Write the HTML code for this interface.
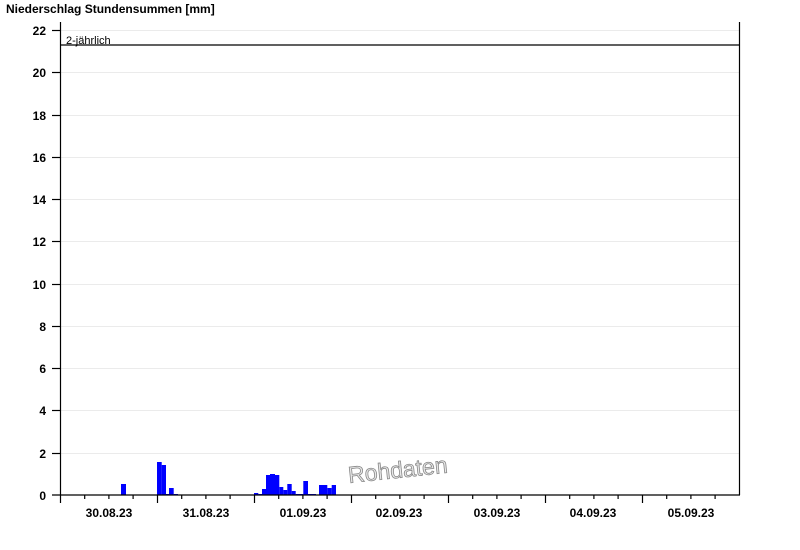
<!DOCTYPE html>
<html><head><meta charset="utf-8"><style>
html,body{margin:0;padding:0;background:#fff;width:800px;height:550px;overflow:hidden}
svg{display:block}
text{font-family:"Liberation Sans",Arial,sans-serif}
</style></head><body>
<svg width="800" height="550" xmlns="http://www.w3.org/2000/svg">
<text x="6" y="13" font-size="12" font-weight="bold" fill="#000">Niederschlag Stundensummen [mm]</text>
<g stroke="#ebebeb" stroke-width="1">
<line x1="61" x2="740" y1="30.5" y2="30.5"/>
<line x1="61" x2="740" y1="72.5" y2="72.5"/>
<line x1="61" x2="740" y1="115.5" y2="115.5"/>
<line x1="61" x2="740" y1="157.5" y2="157.5"/>
<line x1="61" x2="740" y1="199.5" y2="199.5"/>
<line x1="61" x2="740" y1="241.5" y2="241.5"/>
<line x1="61" x2="740" y1="284.5" y2="284.5"/>
<line x1="61" x2="740" y1="326.5" y2="326.5"/>
<line x1="61" x2="740" y1="368.5" y2="368.5"/>
<line x1="61" x2="740" y1="410.5" y2="410.5"/>
<line x1="61" x2="740" y1="453.5" y2="453.5"/>
</g>
<g fill="#0000ff">
<rect x="121" y="484" width="5" height="11"/>
<rect x="157" y="462" width="4.7" height="33"/>
<rect x="161.7" y="465" width="4.3" height="30"/>
<rect x="166" y="494" width="3" height="1"/>
<rect x="169" y="488" width="4.7" height="7"/>
<rect x="173.7" y="494" width="4.3" height="1"/>
<rect x="254" y="493" width="4.3" height="2"/>
<rect x="258.3" y="494" width="3.7" height="1"/>
<rect x="262" y="489" width="4" height="6"/>
<rect x="266" y="475" width="4" height="20"/>
<rect x="270" y="474" width="5" height="21"/>
<rect x="275" y="475" width="4.3" height="20"/>
<rect x="279.3" y="487" width="4" height="8"/>
<rect x="283.3" y="490" width="4" height="5"/>
<rect x="287.3" y="484" width="4.4" height="11"/>
<rect x="291.7" y="491" width="4" height="4"/>
<rect x="295.7" y="494" width="7.6" height="1"/>
<rect x="303.3" y="481" width="4.7" height="14"/>
<rect x="308" y="494" width="8" height="1"/>
<rect x="319" y="485" width="8.3" height="10"/>
<rect x="327.3" y="488" width="4.4" height="7"/>
<rect x="331.7" y="485" width="4.3" height="10"/>
</g>
<g stroke="#000" stroke-width="1.2">
<line x1="60.5" y1="22" x2="60.5" y2="503"/>
<line x1="739.5" y1="22" x2="739.5" y2="495"/>
<line x1="52" y1="495" x2="740" y2="495"/>
<line x1="61" y1="45" x2="740" y2="45"/>
<line x1="52" x2="60" y1="30.5" y2="30.5"/>
<line x1="52" x2="60" y1="72.5" y2="72.5"/>
<line x1="52" x2="60" y1="115.5" y2="115.5"/>
<line x1="52" x2="60" y1="157.5" y2="157.5"/>
<line x1="52" x2="60" y1="199.5" y2="199.5"/>
<line x1="52" x2="60" y1="241.5" y2="241.5"/>
<line x1="52" x2="60" y1="284.5" y2="284.5"/>
<line x1="52" x2="60" y1="326.5" y2="326.5"/>
<line x1="52" x2="60" y1="368.5" y2="368.5"/>
<line x1="52" x2="60" y1="410.5" y2="410.5"/>
<line x1="52" x2="60" y1="453.5" y2="453.5"/>
</g>
<g font-size="12" font-weight="bold" text-anchor="end" fill="#000">
<text x="46" y="35">22</text><text x="46" y="77">20</text><text x="46" y="120">18</text>
<text x="46" y="162">16</text><text x="46" y="204">14</text><text x="46" y="246">12</text>
<text x="46" y="289">10</text><text x="46" y="331">8</text><text x="46" y="373">6</text>
<text x="46" y="415">4</text><text x="46" y="458">2</text><text x="46" y="500">0</text>
</g>
<text x="66" y="44" font-size="11" fill="#000">2-jährlich</text>
<g font-size="12" font-weight="bold" text-anchor="middle" fill="#000">
<text x="109" y="517">30.08.23</text><text x="206" y="517">31.08.23</text>
<text x="303" y="517">01.09.23</text><text x="399" y="517">02.09.23</text>
<text x="497" y="517">03.09.23</text><text x="593" y="517">04.09.23</text>
<text x="691" y="517">05.09.23</text>
</g>
<text x="349" y="483" font-size="23" fill="#e8e8e8" stroke="#888" stroke-width="0.8" transform="rotate(-6 349 483)">Rohdaten</text>
<g stroke="#000" stroke-width="1.2">
<line x1="84.7" x2="84.7" y1="495" y2="499"/><line x1="108.9" x2="108.9" y1="495" y2="499"/><line x1="133.1" x2="133.1" y1="495" y2="499"/>
<line x1="157.5" x2="157.5" y1="495" y2="503"/>
<line x1="181.7" x2="181.7" y1="495" y2="499"/><line x1="205.9" x2="205.9" y1="495" y2="499"/><line x1="230.1" x2="230.1" y1="495" y2="499"/>
<line x1="254.5" x2="254.5" y1="495" y2="503"/>
<line x1="278.7" x2="278.7" y1="495" y2="499"/><line x1="302.9" x2="302.9" y1="495" y2="499"/><line x1="327.1" x2="327.1" y1="495" y2="499"/>
<line x1="351.5" x2="351.5" y1="495" y2="503"/>
<line x1="375.7" x2="375.7" y1="495" y2="499"/><line x1="399.9" x2="399.9" y1="495" y2="499"/><line x1="424.1" x2="424.1" y1="495" y2="499"/>
<line x1="448.5" x2="448.5" y1="495" y2="503"/>
<line x1="472.7" x2="472.7" y1="495" y2="499"/><line x1="496.9" x2="496.9" y1="495" y2="499"/><line x1="521.1" x2="521.1" y1="495" y2="499"/>
<line x1="545.5" x2="545.5" y1="495" y2="503"/>
<line x1="569.7" x2="569.7" y1="495" y2="499"/><line x1="593.9" x2="593.9" y1="495" y2="499"/><line x1="618.1" x2="618.1" y1="495" y2="499"/>
<line x1="642.5" x2="642.5" y1="495" y2="503"/>
<line x1="666.7" x2="666.7" y1="495" y2="499"/><line x1="690.9" x2="690.9" y1="495" y2="499"/><line x1="715.1" x2="715.1" y1="495" y2="499"/>
</g>
</svg>
</body></html>
